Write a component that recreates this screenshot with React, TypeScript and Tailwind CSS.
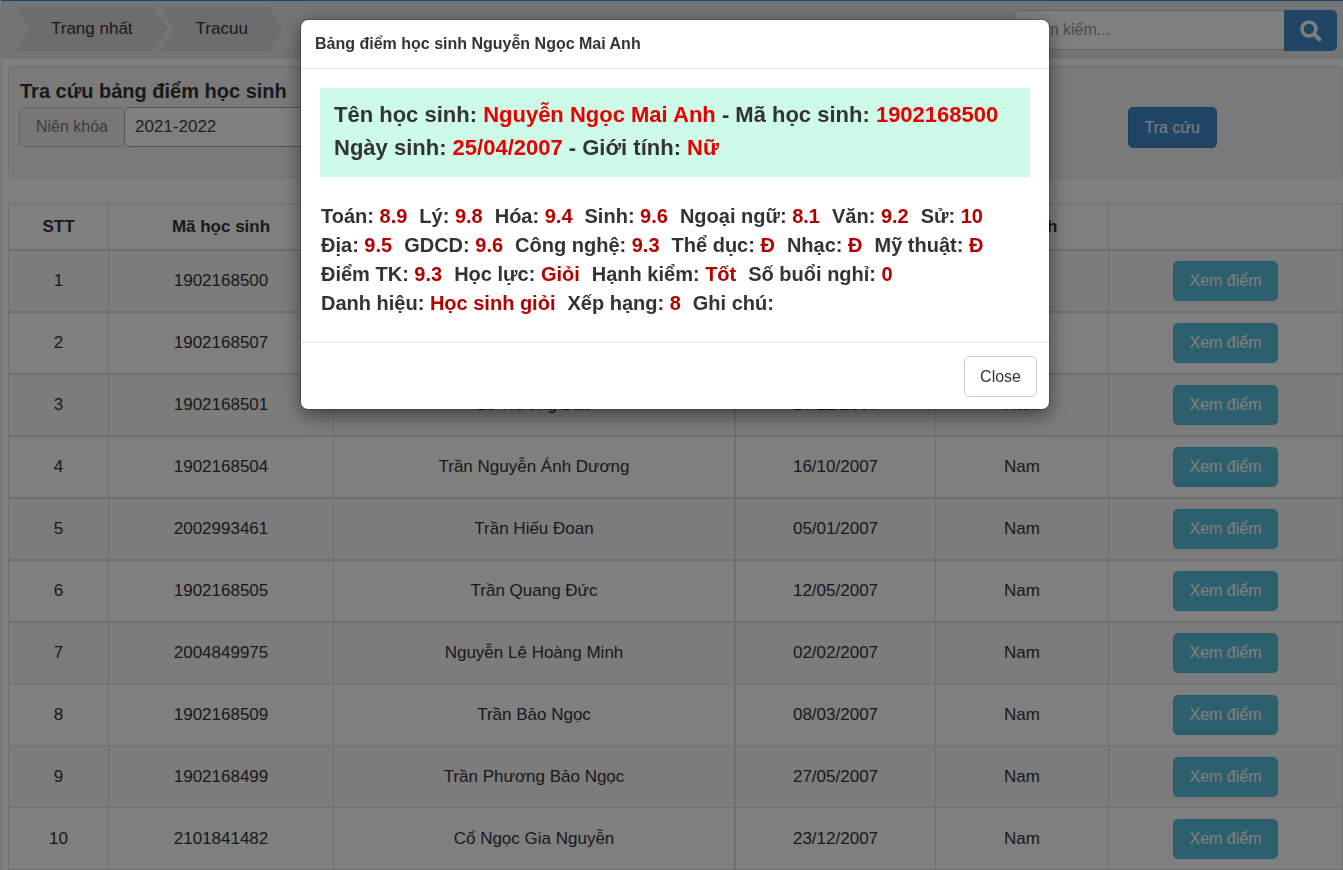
import React from "react";

interface Student {
  code: string;
  name: string;
  birthday: string;
  gender: string;
}

const students: Student[] = [
  { code: "1902168500", name: "Nguyễn Ngọc Mai Anh", birthday: "25/04/2007", gender: "Nữ" },
  { code: "1902168507", name: "Nguyễn Hoàng Anh", birthday: "14/08/2007", gender: "Nam" },
  { code: "1902168501", name: "Lê Trương Bảo", birthday: "17/12/2007", gender: "Nam" },
  { code: "1902168504", name: "Trần Nguyễn Ánh Dương", birthday: "16/10/2007", gender: "Nam" },
  { code: "2002993461", name: "Trần Hiếu Đoan", birthday: "05/01/2007", gender: "Nam" },
  { code: "1902168505", name: "Trần Quang Đức", birthday: "12/05/2007", gender: "Nam" },
  { code: "2004849975", name: "Nguyễn Lê Hoàng Minh", birthday: "02/02/2007", gender: "Nam" },
  { code: "1902168509", name: "Trần Bảo Ngọc", birthday: "08/03/2007", gender: "Nam" },
  { code: "1902168499", name: "Trần Phương Bảo Ngọc", birthday: "27/05/2007", gender: "Nam" },
  { code: "2101841482", name: "Cổ Ngọc Gia Nguyễn", birthday: "23/12/2007", gender: "Nam" },
];

// One inner array per printed line of the report
const grades: [string, string][][] = [
  [["Toán", "8.9"], ["Lý", "9.8"], ["Hóa", "9.4"], ["Sinh", "9.6"], ["Ngoại ngữ", "8.1"], ["Văn", "9.2"], ["Sử", "10"]],
  [["Địa", "9.5"], ["GDCD", "9.6"], ["Công nghệ", "9.3"], ["Thể dục", "Đ"], ["Nhạc", "Đ"], ["Mỹ thuật", "Đ"]],
  [["Điểm TK", "9.3"], ["Học lực", "Giỏi"], ["Hạnh kiểm", "Tốt"], ["Số buổi nghỉ", "0"]],
  [["Danh hiệu", "Học sinh giỏi"], ["Xếp hạng", "8"], ["Ghi chú", ""]],
];

const columns = ["STT", "Mã học sinh", "Họ và tên", "Ngày sinh", "Giới tính", ""];

const SearchIcon = () => (
  <svg viewBox="0 0 22 22" className="w-[22px] h-[22px]" fill="none" stroke="currentColor" aria-hidden="true">
    <circle cx="9" cy="9" r="7" strokeWidth="3.4" />
    <path d="M14.2 14.2L19.4 19.4" strokeWidth="4" strokeLinecap="round" />
  </svg>
);

const Crumb = ({ label }: { label: string }) => (
  <a
    href="#"
    className="h-11 px-[35px] flex items-center bg-[#dadada] text-[17px] text-[#333] [clip-path:polygon(0_0,calc(100%-14px)_0,100%_50%,calc(100%-14px)_100%,0_100%,14px_50%)]"
  >
    {label}
  </a>
);

const TopBar = () => (
  <nav className="h-[57px] flex items-start justify-between bg-[#ebebeb] border-b border-[#d4d4d4] pl-[14px] pr-[6px]">
    <div className="flex pt-[6px] -space-x-[7px]">
      <Crumb label="Trang nhất" />
      <Crumb label="Tracuu" />
    </div>
    <form className="flex pt-[9px]" onSubmit={(e) => e.preventDefault()}>
      <input
        type="text"
        aria-label="Tìm kiếm"
        placeholder="Tìm kiếm..."
        className="w-[269px] h-10 px-[15px] text-[16px] bg-white border border-r-0 border-[#ccc] rounded-l-[5px] placeholder:text-[#999]"
      />
      <button
        type="submit"
        aria-label="Tìm kiếm"
        className="w-[53px] h-[41px] flex items-center justify-center bg-[#428bca] text-white rounded-r-[5px]"
      >
        <SearchIcon />
      </button>
    </form>
  </nav>
);

const LookupPanel = () => (
  <section className="h-[112px] mt-2 ml-[6px] flex items-start justify-between bg-[#f5f5f5] border border-[#e3e3e3] rounded-[5px] pl-[10px] pr-[125px] shadow-[inset_0_1px_1px_rgba(0,0,0,0.05)]">
    <div className="pt-[10px]">
      <h1 className="pl-px pb-[2px] text-[20px] leading-7 font-bold text-[#333]">Tra cứu bảng điểm học sinh</h1>
      <div className="flex h-10">
        <label
          htmlFor="year"
          className="w-[105px] flex items-center justify-center text-[16px] text-[#777] bg-[#eee] border border-r-0 border-[#ccc] rounded-l-[5px]"
        >
          Niên khóa
        </label>
        <select
          id="year"
          className="w-[360px] px-[10px] text-[17px] text-[#444] bg-white border border-[#aaa] rounded-[5px] appearance-none"
        >
          <option>2021-2022</option>
        </select>
      </div>
    </div>
    <button type="button" className="mt-10 h-[41px] px-4 bg-[#428bca] text-white text-[16px] rounded-[5px] border border-[#357ebd]">
      Tra cứu
    </button>
  </section>
);

const StudentTable = () => (
  <table className="mt-[25px] ml-[6px] w-[calc(100%-6px)] table-fixed border-separate border-spacing-0 border-t border-l border-[#ddd] text-center text-[17px] text-[#333]">
    <colgroup>
      <col className="w-[100px]" />
      <col className="w-[225px]" />
      <col />
      <col className="w-[200px]" />
      <col className="w-[173px]" />
      <col className="w-[234px]" />
    </colgroup>
    <thead>
      <tr>
        {columns.map((title, i) => (
          <th key={i} className="h-[47px] border-r border-b-2 border-[#ddd] font-bold nth-3:border-r-2">
            {title}
          </th>
        ))}
      </tr>
    </thead>
    <tbody className="[&_td]:h-[62px] [&_td]:border-r [&_td]:border-b-2 [&_td]:border-[#ddd] [&_td:nth-child(3)]:border-r-2 [&_tr:nth-child(n+7)_td]:border-b [&_tr:nth-child(7)_td]:h-[61px]">
      {students.map((student, i) => (
        <tr key={student.code} className="odd:bg-[#f9f9f9]">
          <td>{i + 1}</td>
          <td>{student.code}</td>
          <td>{student.name}</td>
          <td>{student.birthday}</td>
          <td>{student.gender}</td>
          <td>
            <button type="button" className="h-10 px-[15px] align-middle bg-[#5bc0de] text-white text-[16px] rounded-[5px] border border-[#46b8da]">
              Xem điểm
            </button>
          </td>
        </tr>
      ))}
    </tbody>
  </table>
);

const ReportDialog = () => (
  <div className="fixed inset-0 pl-[7px] flex items-start justify-center bg-black/50">
    <div
      role="dialog"
      aria-modal="true"
      aria-labelledby="report-title"
      className="mt-5 w-[748px] max-w-full bg-white text-[#333] rounded-[7px] shadow-[0_6px_19px_rgba(0,0,0,0.5),0_0_0_1px_rgba(0,0,0,0.2)]"
    >
      <header className="h-[49px] flex items-center px-[14px] border-b border-[#e5e5e5]">
        <h2 id="report-title" className="text-[16px] font-bold">Bảng điểm học sinh Nguyễn Ngọc Mai Anh</h2>
      </header>
      <div className="px-[19px] pt-[19px] pb-[24px] font-bold">
        <p className="mb-[25px] px-[14px] pt-[10px] pb-[13px] bg-[#cefbe8] text-[22px] leading-[33px]">
          Tên học sinh: <span className="text-[#e60000]">Nguyễn Ngọc Mai Anh</span> - Mã học sinh:{" "}
          <span className="text-[#e60000]">1902168500</span>
          <br />
          Ngày sinh: <span className="text-[#e60000]">25/04/2007</span> - Giới tính:{" "}
          <span className="text-[#e60000]">Nữ</span>
        </p>
        {grades.map((line, i) => (
          <p key={i} className="flex gap-3 px-px text-[20px] leading-[29px]">
            {line.map(([subject, score]) => (
              <span key={subject}>
                {subject}: <span className="text-[#b30000]">{score}</span>
              </span>
            ))}
          </p>
        ))}
      </div>
      <footer className="flex justify-end pt-[13px] pb-3 pr-3 border-t border-[#e5e5e5]">
        <button type="button" className="h-[41px] px-[15px] text-[16px] font-normal bg-white border border-[#ccc] rounded-[5px]">
          Close
        </button>
      </footer>
    </div>
  </div>
);

export default function App() {
  return (
    <div className="h-screen overflow-hidden bg-white font-['Liberation_Sans',Arial,sans-serif]">
      <main className="ml-px border-t border-[#428bca] border-l border-l-[#ddd]">
        <TopBar />
        <LookupPanel />
        <StudentTable />
      </main>
      <ReportDialog />
    </div>
  );
}
